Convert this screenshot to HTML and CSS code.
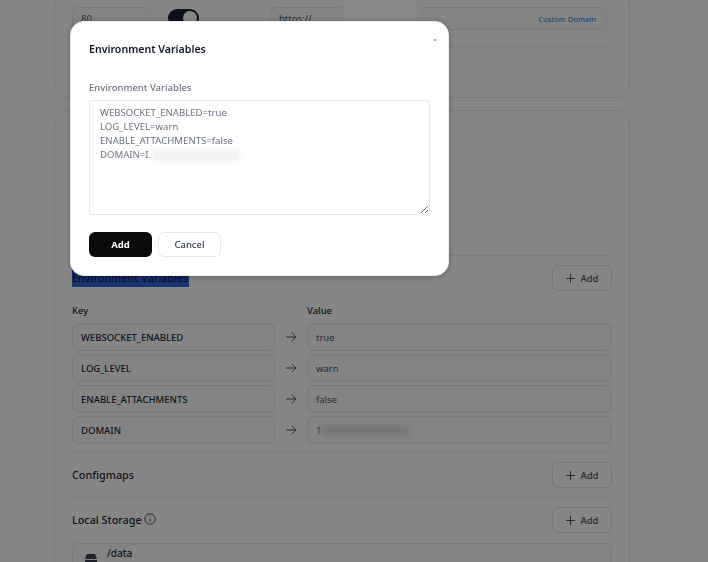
FILE: index.html
```html
<!DOCTYPE html>
<html lang="en">
  <head>
    <meta charset="UTF-8" />
    <meta name="viewport" content="width=device-width, initial-scale=1.0" />
    <title>Environment Variables</title>
    <link rel="stylesheet" href="styles.css">
  </head>
  <body>
    <div class="page">
      <div class="card card-ports">
        <div class="port-row">
          <div class="field port-field">80</div>
          <div class="toggle"><span class="toggle-knob"></span></div>
          <div class="field url-field">
            <span>https://</span>
            <span class="blur-patch url-patch"></span>
            <a class="domain-link" href="#">Custom Domain</a>
          </div>
        </div>
        <div class="divider"></div>
      </div>

      <div class="card card-config">
        <div class="card-spacer"></div>
        <div class="divider"></div>

        <div class="section-head env-head">
          <h4 class="section-title"><span class="selected">Environment Variables</span></h4>
          <button class="add-btn">
            <svg viewBox="0 0 12 12" width="11" height="11"><path d="M6 1.2v9.6M1.2 6h9.6" /></svg>
            Add
          </button>
        </div>

        <div class="env-grid">
          <div class="col-label">Key</div>
          <div></div>
          <div class="col-label">Value</div>

          <div class="field key">WEBSOCKET_ENABLED</div>
          <svg class="arrow" viewBox="0 0 12 12" width="12" height="12"><path d="M1 6h10M6.6 1.6 11 6l-4.4 4.4" /></svg>
          <div class="field value">true</div>

          <div class="field key">LOG_LEVEL</div>
          <svg class="arrow" viewBox="0 0 12 12" width="12" height="12"><path d="M1 6h10M6.6 1.6 11 6l-4.4 4.4" /></svg>
          <div class="field value">warn</div>

          <div class="field key">ENABLE_ATTACHMENTS</div>
          <svg class="arrow" viewBox="0 0 12 12" width="12" height="12"><path d="M1 6h10M6.6 1.6 11 6l-4.4 4.4" /></svg>
          <div class="field value">false</div>

          <div class="field key">DOMAIN</div>
          <svg class="arrow" viewBox="0 0 12 12" width="12" height="12"><path d="M1 6h10M6.6 1.6 11 6l-4.4 4.4" /></svg>
          <div class="field value">1<span class="blur-patch value-patch"></span></div>
        </div>

        <div class="divider env-end"></div>

        <div class="section-head">
          <h4 class="section-title">Configmaps</h4>
          <button class="add-btn">
            <svg viewBox="0 0 12 12" width="11" height="11"><path d="M6 1.2v9.6M1.2 6h9.6" /></svg>
            Add
          </button>
        </div>

        <div class="divider"></div>

        <div class="section-head">
          <h4 class="section-title">
            Local Storage
            <svg class="info" viewBox="0 0 12 12" width="12" height="12">
              <circle cx="6" cy="6" r="5.2" />
              <path d="M6 5.4v3.2M6 3.2v1" />
            </svg>
          </h4>
          <button class="add-btn">
            <svg viewBox="0 0 12 12" width="11" height="11"><path d="M6 1.2v9.6M1.2 6h9.6" /></svg>
            Add
          </button>
        </div>

        <div class="storage-box">
          <svg class="disk" viewBox="0 0 14 14" width="14" height="14">
            <path d="M3 1h8l2 5H1z" />
            <path d="M1 7h12v6H1z" />
          </svg>
          <span class="storage-path">/data</span>
        </div>
      </div>
    </div>

    <div class="overlay"></div>

    <div class="modal">
      <span class="close-mark"></span>
      <h3 class="modal-title">Environment Variables</h3>
      <label class="modal-label" for="env-text">Environment Variables</label>
      <div class="textarea-wrap">
        <textarea id="env-text" class="env-text">WEBSOCKET_ENABLED=true
LOG_LEVEL=warn
ENABLE_ATTACHMENTS=false
DOMAIN=I.</textarea>
        <span class="blur-patch modal-patch"></span>
      </div>
      <div class="modal-actions">
        <button class="btn-primary">Add</button>
        <button class="btn-cancel">Cancel</button>
      </div>
    </div>
  </body>
</html>
```

FILE: styles.css
```css
* {
  box-sizing: border-box;
}
html,
body {
  height: 100%;
}
body {
  font-family: "Noto Sans", Inter, sans-serif;
  background-color: #fdfdfd;
  color: #111827;
  margin: 0;
  overflow: hidden;
}
.page {
  width: 576px;
  margin: -10px 0 0 54px;
}
.card {
  border: 1px solid #e8e9ec;
  border-radius: 14px;
  padding: 0 17px;
  margin-bottom: 12px;
}
.card-ports {
  height: 108px;
  padding-top: 16px;
}
.card-spacer {
  height: 144px;
}
.divider {
  height: 1px;
  background-color: #eceded;
}
.port-row {
  display: flex;
  align-items: flex-start;
  margin-bottom: 16px;
  padding-right: 5px;
}
.field {
  display: flex;
  align-items: center;
  height: 28px;
  padding: 0 8px;
  border: 1px solid #e6e7ea;
  border-radius: 6px;
  background-color: #f9f9fa;
  font-size: 9.5px;
}
.port-field {
  width: 79px;
  height: 23px;
  color: #4b5563;
}
.toggle {
  width: 31px;
  height: 18px;
  margin: 2px 71px 0 17px;
  border-radius: 9px;
  background-color: #172033;
  position: relative;
}
.toggle-knob {
  position: absolute;
  top: 2px;
  right: 2px;
  width: 14px;
  height: 14px;
  border-radius: 50%;
  background-color: #fff;
}
.url-field {
  flex: 1;
  height: 23px;
  position: relative;
  justify-content: space-between;
  color: #4b5563;
}
.domain-link {
  color: #1b84d8;
  font-size: 7.6px;
  text-decoration: none;
  margin-right: 2px;
}
.blur-patch {
  position: absolute;
  filter: blur(3px);
  background-color: #fff;
}
.url-patch {
  left: 70px;
  top: -8px;
  width: 80px;
  height: 22px;
}
.section-head {
  display: flex;
  align-items: center;
  justify-content: space-between;
  padding: 9px 0;
}
.env-head {
  padding-bottom: 0;
}
.section-title {
  display: flex;
  align-items: center;
  gap: 2px;
  margin: 0 0 2px;
  font-size: 10.8px;
  font-weight: 500;
  color: #1f2937;
}
.selected {
  background-color: #2f63d8;
  color: #0d1f4d;
  padding: 2px 0;
}
.add-btn {
  display: flex;
  align-items: center;
  justify-content: center;
  gap: 4px;
  width: 60px;
  height: 26px;
  border: 1px solid #e0e1e5;
  border-radius: 6px;
  background-color: #fdfdfd;
  color: #4b5563;
  font-family: inherit;
  font-size: 9.5px;
  font-weight: 500;
}
.add-btn svg {
  stroke: #374151;
  stroke-width: 1;
  fill: none;
}
.env-grid {
  display: grid;
  grid-template-columns: 203px 32px 305px;
  grid-template-rows: 16px;
  grid-auto-rows: 28px;
  row-gap: 3px;
  align-items: center;
  margin-top: 13px;
}
.col-label {
  align-self: start;
  font-size: 9.5px;
  line-height: 14px;
  font-weight: 500;
  color: #1f2937;
}
.arrow {
  justify-self: center;
  stroke: #4b5563;
  stroke-width: 1;
  fill: none;
}
.key {
  color: #1f2937;
  font-weight: 500;
}
.value {
  color: #4b5563;
  position: relative;
}
.value-patch {
  left: 13px;
  top: 9px;
  width: 88px;
  height: 9px;
  background-color: #dedede;
  filter: blur(2px);
}
.env-end {
  margin-top: 8px;
}
.info {
  stroke: #4b5563;
  stroke-width: 1;
  fill: none;
}
.storage-box {
  display: flex;
  gap: 9px;
  height: 60px;
  margin-top: 1px;
  padding: 2px 11px;
  border: 1px solid #e6e7ea;
  border-radius: 6px;
  background-color: #fafafb;
}
.disk {
  margin-top: 7px;
  fill: #374151;
}
.storage-path {
  font-size: 10px;
  font-weight: 500;
  color: #1f2937;
}
.overlay {
  position: fixed;
  inset: 0;
  background-color: rgba(0, 0, 0, 0.47);
}
.modal {
  position: fixed;
  top: 21px;
  left: 70px;
  width: 379px;
  height: 255px;
  padding: 20px 18px;
  background-color: #fff;
  border: 1px solid #eeeef1;
  border-radius: 14px;
  box-shadow: 0 1px 6px rgba(0, 0, 0, 0.25);
}
.close-mark {
  position: absolute;
  top: 17px;
  right: 12px;
  width: 2px;
  height: 2px;
  background-color: #9ca3af;
}
.modal-title {
  margin: 0 0 26px;
  font-size: 10.6px;
  line-height: 14px;
  font-weight: 600;
  color: #111827;
}
.modal-label {
  display: block;
  margin-bottom: 6px;
  font-size: 9.5px;
  line-height: 12px;
  font-weight: 500;
  color: #6b7280;
}
.textarea-wrap {
  position: relative;
  height: 115px;
}
.env-text {
  display: block;
  width: 100%;
  height: 115px;
  padding: 5px 10px;
  border: 1px solid #e5e7eb;
  border-radius: 4px;
  font-family: inherit;
  font-size: 9.6px;
  line-height: 14px;
  color: #6b7280;
}
.modal-patch {
  left: 64px;
  top: 49px;
  width: 86px;
  height: 13px;
  background-color: #f3f3f3;
  filter: blur(2px);
}
.modal-actions {
  display: flex;
  gap: 6px;
  margin-top: 17px;
}
.btn-primary,
.btn-cancel {
  width: 63px;
  height: 25px;
  border-radius: 6px;
  font-family: inherit;
  font-size: 9.5px;
}
.btn-primary {
  border: none;
  background-color: #0a0a0a;
  color: #fff;
  font-weight: 700;
}
.btn-cancel {
  border: 1px solid #e5e7eb;
  background-color: #fff;
  color: #374151;
  font-weight: 500;
}
```
